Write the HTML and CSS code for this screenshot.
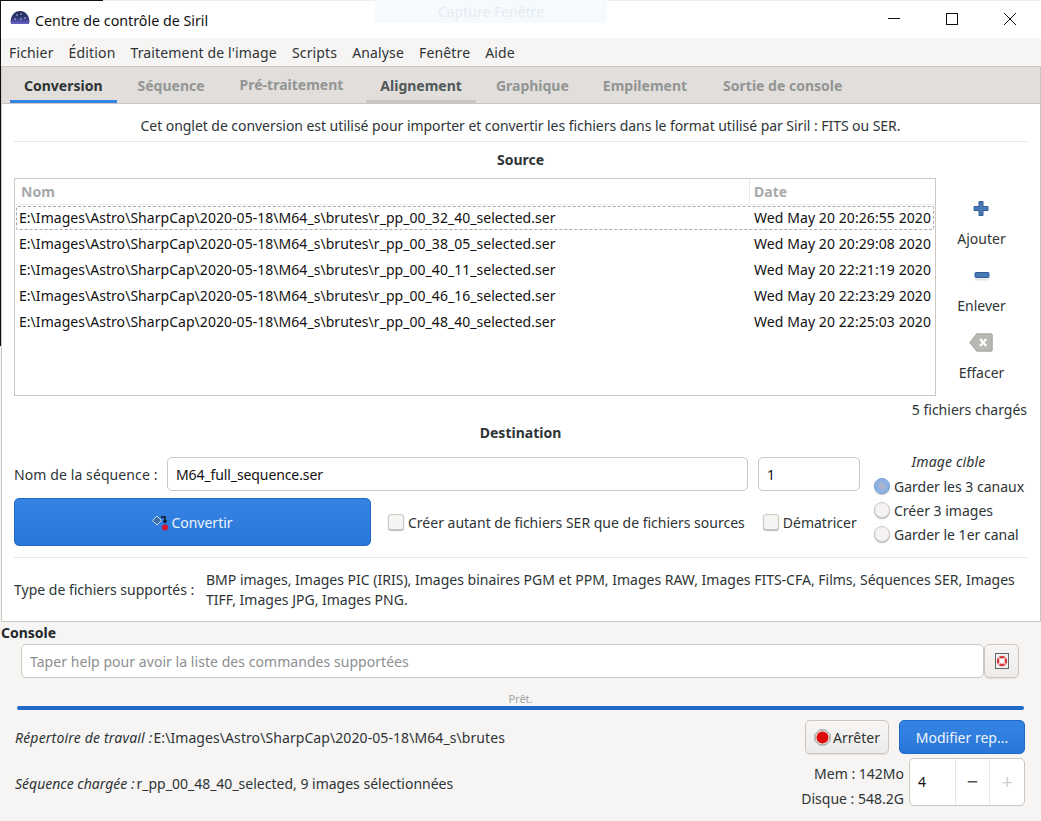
FILE: index.html
```html
<!DOCTYPE html>
<html lang="fr">
<head>
<meta charset="utf-8">
<title>Centre de contrôle de Siril</title>
<link rel="stylesheet" href="styles.css">
</head>
<body>
<div class="window">
  <div class="ghost">Capture Fenêtre</div>
  <div class="edge-left"></div>
  <div class="edge-top"></div>
  <header class="titlebar">
    <svg class="logo" width="20" height="16" viewBox="0 0 20 16"><defs><linearGradient id="dome" x1="0" y1="0" x2="0" y2="1"><stop offset="0" stop-color="#1f2a55"/><stop offset=".55" stop-color="#2f3a78"/><stop offset="1" stop-color="#6a62c8"/></linearGradient></defs><path d="M.5 12.500C.5 5.500 4.500 1 10 1s9.500 4.500 9.500 11.500c0 1-1 1.500-2 1.500H2.500c-1 0-2-.5-2-1.500z" fill="url(#dome)"/><g fill="#e6e9f8"><circle cx="7" cy="5" r=".7"/><circle cx="11" cy="4" r=".7"/><circle cx="15" cy="8" r=".7"/><circle cx="5" cy="9" r=".7"/><circle cx="11" cy="9" r=".7"/></g></svg>
    <span class="title">Centre de contrôle de Siril</span>
    <div class="controls">
      <svg width="14" height="14" viewBox="0 0 14 14"><path d="M1 6.500H13" stroke="#111" fill="none"/></svg>
      <svg width="14" height="14" viewBox="0 0 14 14"><rect x="1.500" y="1.500" width="11" height="11" stroke="#111" fill="none"/></svg>
      <svg width="14" height="14" viewBox="0 0 14 14"><path d="M1 1L13 13M13 1L1 13" stroke="#111" fill="none"/></svg>
    </div>
  </header>
  <nav class="menubar">
    <span>Fichier</span><span>Édition</span><span>Traitement de l'image</span><span>Scripts</span><span>Analyse</span><span>Fenêtre</span><span>Aide</span>
  </nav>
  <section class="notebook">
    <div class="tabs">
      <div class="tab active">Conversion</div>
      <div class="tab">Séquence</div>
      <div class="tab raised">Pré-traitement</div>
      <div class="tab hover">Alignement</div>
      <div class="tab tight">Graphique</div>
      <div class="tab roomy">Empilement</div>
      <div class="tab">Sortie de console</div>
    </div>
    <div class="panel">
      <p class="intro">Cet onglet de conversion est utilisé pour importer et convertir les fichiers dans le format utilisé par Siril : FITS ou SER.</p>
      <h2 class="heading source-heading">Source</h2>
      <div class="source">
        <div class="tree">
          <div class="tree-head"><div class="col-name">Nom</div><div class="col-date">Date</div></div>
          <div class="row focused"><div class="col-name">E:\Images\Astro\SharpCap\2020-05-18\M64_s\brutes\r_pp_00_32_40_selected.ser</div><div class="col-date">Wed May 20 20:26:55 2020</div></div>
          <div class="row"><div class="col-name">E:\Images\Astro\SharpCap\2020-05-18\M64_s\brutes\r_pp_00_38_05_selected.ser</div><div class="col-date">Wed May 20 20:29:08 2020</div></div>
          <div class="row"><div class="col-name">E:\Images\Astro\SharpCap\2020-05-18\M64_s\brutes\r_pp_00_40_11_selected.ser</div><div class="col-date">Wed May 20 22:21:19 2020</div></div>
          <div class="row"><div class="col-name">E:\Images\Astro\SharpCap\2020-05-18\M64_s\brutes\r_pp_00_46_16_selected.ser</div><div class="col-date">Wed May 20 22:23:29 2020</div></div>
          <div class="row"><div class="col-name">E:\Images\Astro\SharpCap\2020-05-18\M64_s\brutes\r_pp_00_48_40_selected.ser</div><div class="col-date">Wed May 20 22:25:03 2020</div></div>
        </div>
        <div class="side">
          <div class="side-btn">
            <svg width="16" height="16" viewBox="0 0 16 16"><path d="M6 1h4v5h5v4h-5v5H6v-5H1V6h5z" fill="#4a7ab5" stroke="#2f5c96"/></svg>
            <span>Ajouter</span>
          </div>
          <div class="side-btn">
            <svg width="16" height="16" viewBox="0 0 16 16"><rect x="1" y="5" width="14" height="5" rx="1" fill="#4a7ab5" stroke="#2f5c96"/><rect x="1" y="11" width="14" height="2" fill="#e4e4e4"/></svg>
            <span>Enlever</span>
          </div>
          <div class="side-btn">
            <svg width="28" height="22" viewBox="0 0 28 22"><path d="M9 1H26a1 1 0 0 1 1 1V20a1 1 0 0 1-1 1H9L1 11z" fill="#b6bab2" stroke="#979b94"/><path d="M13 7l7 8M20 7l-7 8" stroke="#fff" stroke-width="2.500" fill="none"/></svg>
            <span>Effacer</span>
          </div>
        </div>
      </div>
      <div class="count">5 fichiers chargés</div>
      <h2 class="heading dest-heading">Destination</h2>
      <div class="dest">
        <div class="dest-main">
          <div class="name-row">
            <label class="seq-label">Nom de la séquence :</label>
            <div class="entry seq-entry">M64_full_sequence.ser</div>
            <div class="entry num-entry">1</div>
          </div>
          <div class="action-row">
            <button class="btn-primary convert">
              <svg width="16" height="17" viewBox="0 0 16 17"><path d="M5 2l4.500 4.500L5 11 .5 6.500z" fill="#3c6fa8" stroke="#dbe6f2" stroke-width=".9"/><path d="M9 3h4v4" stroke="#111" stroke-width="1.400" fill="none"/><path d="M10.500 6.500h5L13 9.500z" fill="#111"/><circle cx="13" cy="13.500" r="3" fill="#d8132a"/></svg>
              Convertir
            </button>
            <label class="check wide"><i class="box"></i>Créer autant de fichiers SER que de fichiers sources</label>
            <label class="check"><i class="box"></i>Dématricer</label>
          </div>
        </div>
        <div class="target">
          <div class="target-title">Image cible</div>
          <label class="radio"><i class="dot on"></i>Garder les 3 canaux</label>
          <label class="radio"><i class="dot"></i>Créer 3 images</label>
          <label class="radio"><i class="dot"></i>Garder le 1er canal</label>
        </div>
      </div>
      <div class="types">
        <div class="types-label">Type de fichiers supportés :</div>
        <div class="types-list">BMP images, Images PIC (IRIS), Images binaires PGM et PPM, Images RAW, Images FITS-CFA, Films, Séquences SER, Images TIFF, Images JPG, Images PNG.</div>
      </div>
    </div>
  </section>
  <footer class="bottom">
    <div class="console-title">Console</div>
    <div class="console-row">
      <div class="entry console-entry">Taper help pour avoir la liste des commandes supportées</div>
      <button class="help-btn" aria-label="Aide"><svg width="14" height="16" viewBox="0 0 14 16"><rect x=".5" y=".5" width="13" height="15" fill="#f0f0f0" stroke="#666"/><circle cx="7" cy="8" r="4" fill="#fff" stroke="#d43a3a" stroke-width="2.400"/><path d="M3.500 4.500l2 2M10.500 4.500l-2 2M3.500 11.500l2-2M10.500 11.500l-2-2" stroke="#f2dede" stroke-width="1.200"/></svg></button>
    </div>
    <div class="status-text">Prêt.</div>
    <div class="progress"></div>
    <div class="info-row first">
      <div class="info"><em>Répertoire de travail :</em>E:\Images\Astro\SharpCap\2020-05-18\M64_s\brutes</div>
      <button class="btn-stop"><svg width="17" height="17" viewBox="0 0 17 17"><path d="M5.500 1h6L16 5.500v6L11.500 16h-6L1 11.500v-6z" fill="#e4e4e4" stroke="#888"/><circle cx="8.500" cy="8.500" r="6" fill="#dd0a0a"/></svg>Arrêter</button>
      <button class="btn-primary modify">Modifier rep...</button>
    </div>
    <div class="info-row second">
      <div class="info"><em>Séquence chargée :</em>r_pp_00_48_40_selected, 9 images sélectionnées</div>
      <div class="usage"><div>Mem : 142Mo</div><div>Disque : 548.2G</div></div>
      <div class="spin"><span class="spin-val">4</span><span class="spin-btn">−</span><span class="spin-btn off">+</span></div>
    </div>
  </footer>
</div>
</body>
</html>
```

FILE: styles.css
```css
* { box-sizing: border-box; }
html, body { margin: 0; padding: 0; }
body {
  width: 1041px;
  height: 821px;
  overflow: hidden;
  font-family: "Noto Sans", "Open Sans", "Liberation Sans", sans-serif;
  font-size: 14px;
  color: #2e3436;
  background: #f6f5f4;
}
button { font: inherit; color: inherit; margin: 0; }
.window { position: relative; display: flex; flex-direction: column; height: 821px; }
.ghost {
  position: absolute; left: 375px; top: 0; width: 232px; height: 23px; z-index: 1;
  background: #f5fafe; color: #e6ebf0; text-align: center; line-height: 23px; font-size: 14px;
}
.edge-left { position: absolute; left: 0; top: 0; width: 1px; height: 346px; background: #111; z-index: 2; }
.edge-top { position: absolute; left: 0; top: 0; width: 103px; height: 1px; background: #111; z-index: 2; }
.titlebar {
  height: 38px; background: #fff; display: flex; align-items: center;
  padding: 1px 0 0 10px; border-top: 1px solid #eee; position: relative;
}
.logo { margin-right: 5px; margin-top: -4px; }
.title { font-size: 14.25px; color: #111; }
.controls { margin-left: auto; display: flex; gap: 44px; padding-right: 24px; margin-top: -3px; }
.menubar {
  height: 28px; background: #f6f5f4; display: flex; align-items: center;
  gap: 15px; padding: 0 9px; color: #2e3436; letter-spacing: .15px;
}
.notebook {
  height: 556px; margin-left: 1px; border: 1px solid #cdc7c2;
  display: flex; flex-direction: column; background: #fff;
}
.tabs {
  height: 37px; background: #e1dedb; border-bottom: 1px solid #cdc7c2;
  display: flex; padding-left: 8px; flex: none;
}
.tab {
  padding: 0 14px; margin-right: 7px; height: 36px; line-height: 38px;
  font-weight: 700; color: #929595; border-bottom: 3px solid transparent; white-space: nowrap;
}
.tab.active { color: #2e3436; border-bottom-color: #3584e4; }
.tab.raised { line-height: 36px; margin-right: 9px; }
.tab.hover { color: #50585a; border-bottom-color: #c8c5c2; margin-right: 6px; }
.tab.tight { margin-right: 6px; }
.tab.roomy { margin-right: 8px; }
.panel { flex: 1; padding: 0 13px 0 12px; display: flex; flex-direction: column; }
.intro {
  margin: 0; height: 38px; line-height: 43px; text-align: center;
  border-bottom: 1px solid #e8e6e4; letter-spacing: -.05px;
}
.heading { margin: 0; font-size: 14px; font-weight: 700; text-align: center; line-height: 20px; }
.source-heading { margin-top: 8px; }
.source { display: flex; margin-top: 8px; height: 218px; }
.tree { width: 922px; height: 218px; border: 1px solid #cdc7c2; background: #fff; flex: none; }
.tree-head { display: flex; height: 26px; border-bottom: 1px solid #f0eeec; font-weight: 700; color: #a7a9aa; line-height: 25px; }
.tree-head .col-name { border-right: 1px solid #ecebe9; padding-left: 6px; }
.col-name { width: 735px; flex: none; padding-left: 4px; white-space: nowrap; overflow: hidden; }
.col-date { padding-left: 4px; white-space: nowrap; }
.row { display: flex; height: 26px; line-height: 26px; color: #111; letter-spacing: .04px; }
.row .col-date { letter-spacing: .08px; }
.row.focused { outline: 1px dashed #aaa; outline-offset: -2px; border-radius: 3px; }
.side { flex: 1; display: flex; flex-direction: column; align-items: center; padding-top: 21px; }
.side-btn { display: flex; flex-direction: column; align-items: center; flex: none; height: 67px; gap: 11px; }
.side-btn:last-child { height: 62px; }
.side-btn svg { height: 19px; }
.count { text-align: right; height: 28px; line-height: 28px; }
.dest-heading { height: 18px; line-height: 18px; }
.dest { display: flex; height: 101px; margin-top: 15px; padding-bottom: 5px; border-bottom: 1px solid #e8e6e4; }
.dest-main { width: 860px; flex: none; }
.name-row { display: flex; align-items: center; height: 34px; }
.seq-label { width: 153px; flex: none; letter-spacing: .1px; }
.entry { border: 1px solid #cdc7c2; border-radius: 5px; background: #fff; height: 34px; line-height: 34px; padding: 0 8px; color: #111; }
.seq-entry { width: 581px; letter-spacing: -.1px; }
.num-entry { width: 102px; margin-left: 10px; }
.action-row { display: flex; align-items: center; height: 48px; margin-top: 7px; }
.btn-primary {
  background: linear-gradient(#3584e4, #2a76d6); border: 1px solid #1f6ac7; border-radius: 5px;
  color: #eef4fc; display: flex; align-items: center; justify-content: center;
}
.convert { width: 357px; height: 48px; gap: 3px; margin-right: 17px; flex: none; }
.check { display: flex; align-items: center; gap: 4px; white-space: nowrap; }
.check.wide { margin-right: 18px; }
.box { width: 16px; height: 16px; border: 1px solid #cdc7c2; border-radius: 3px; background: #f5f4f3; box-shadow: 0 1px 1px #bbb; flex: none; }
.target { flex: 1; white-space: nowrap; }
.target-title { font-style: italic; text-align: center; height: 17px; line-height: 10px; padding-right: 3px; width: 152px; letter-spacing: .15px; }
.radio { display: flex; align-items: center; height: 24px; gap: 4px; }
.dot { width: 16px; height: 16px; border-radius: 50%; border: 1px solid #cdc7c2; background: #f5f4f3; box-shadow: 0 1px 1px #bbb; flex: none; }
.dot.on { background: radial-gradient(circle, #a9b4c4 0 3px, #8fb2e3 3.500px); border-color: #6f9ad6; }
.types { display: flex; align-items: center; flex: 1; }
.types-label { width: 192px; flex: none; }
.types-list { width: 820px; line-height: 20px; }
.bottom { flex: 1; background: #f6f5f4; display: flex; flex-direction: column; }
.console-title { font-weight: 700; padding-left: 1px; height: 22px; line-height: 22px; color: #23282a; }
.console-row { display: flex; padding-left: 21px; height: 34px; }
.console-entry { width: 963px; color: #8c8f90; letter-spacing: .05px; }
.help-btn { width: 35px; height: 34px; background: linear-gradient(#f7f6f5, #edebe9); border: 1px solid #cdc7c2; border-radius: 5px; padding: 0; display: flex; align-items: center; justify-content: center; box-shadow: 0 1px 1px #e2e0de; }
.status-text { font-size: 11px; color: #a0a2a2; text-align: center; height: 28px; line-height: 15px; padding-top: 13px; }
.progress { height: 4px; margin: 0 17px; background: #1f6ac7; border-radius: 2px; flex: none; }
.info-row { display: flex; align-items: center; padding: 0 16px 0 15px; }
.info-row.first { height: 34px; margin-top: 10px; }
.info-row.second { height: 48px; margin-top: 4px; }
.info { flex: 1; white-space: nowrap; }
.info em { margin-right: 2px; }
.second .info { padding-top: 2px; }
.first .info { letter-spacing: .08px; }
.first .info em { letter-spacing: .18px; margin-right: 1px; }
.btn-stop {
  width: 84px; height: 34px; background: linear-gradient(#f7f6f5, #edebe9); border: 1px solid #cdc7c2; border-radius: 5px;
  display: flex; align-items: center; justify-content: center; gap: 2px; padding: 0; margin-right: 10px; box-shadow: 0 1px 1px #e2e0de;
}
.modify { width: 126px; height: 34px; }
.usage { text-align: right; line-height: 25px; margin-right: 5px; padding-top: 8px; }
.spin { display: flex; width: 116px; height: 48px; border: 1px solid #cdc7c2; border-radius: 5px; background: #fff; }
.spin-val { width: 45px; padding-left: 8px; line-height: 46px; color: #111; }
.spin-btn { width: 35px; border-left: 1px solid #e8e6e4; text-align: center; line-height: 46px; font-size: 20px; color: #555; }
.spin-btn.off { color: #cfd0d0; }
```
